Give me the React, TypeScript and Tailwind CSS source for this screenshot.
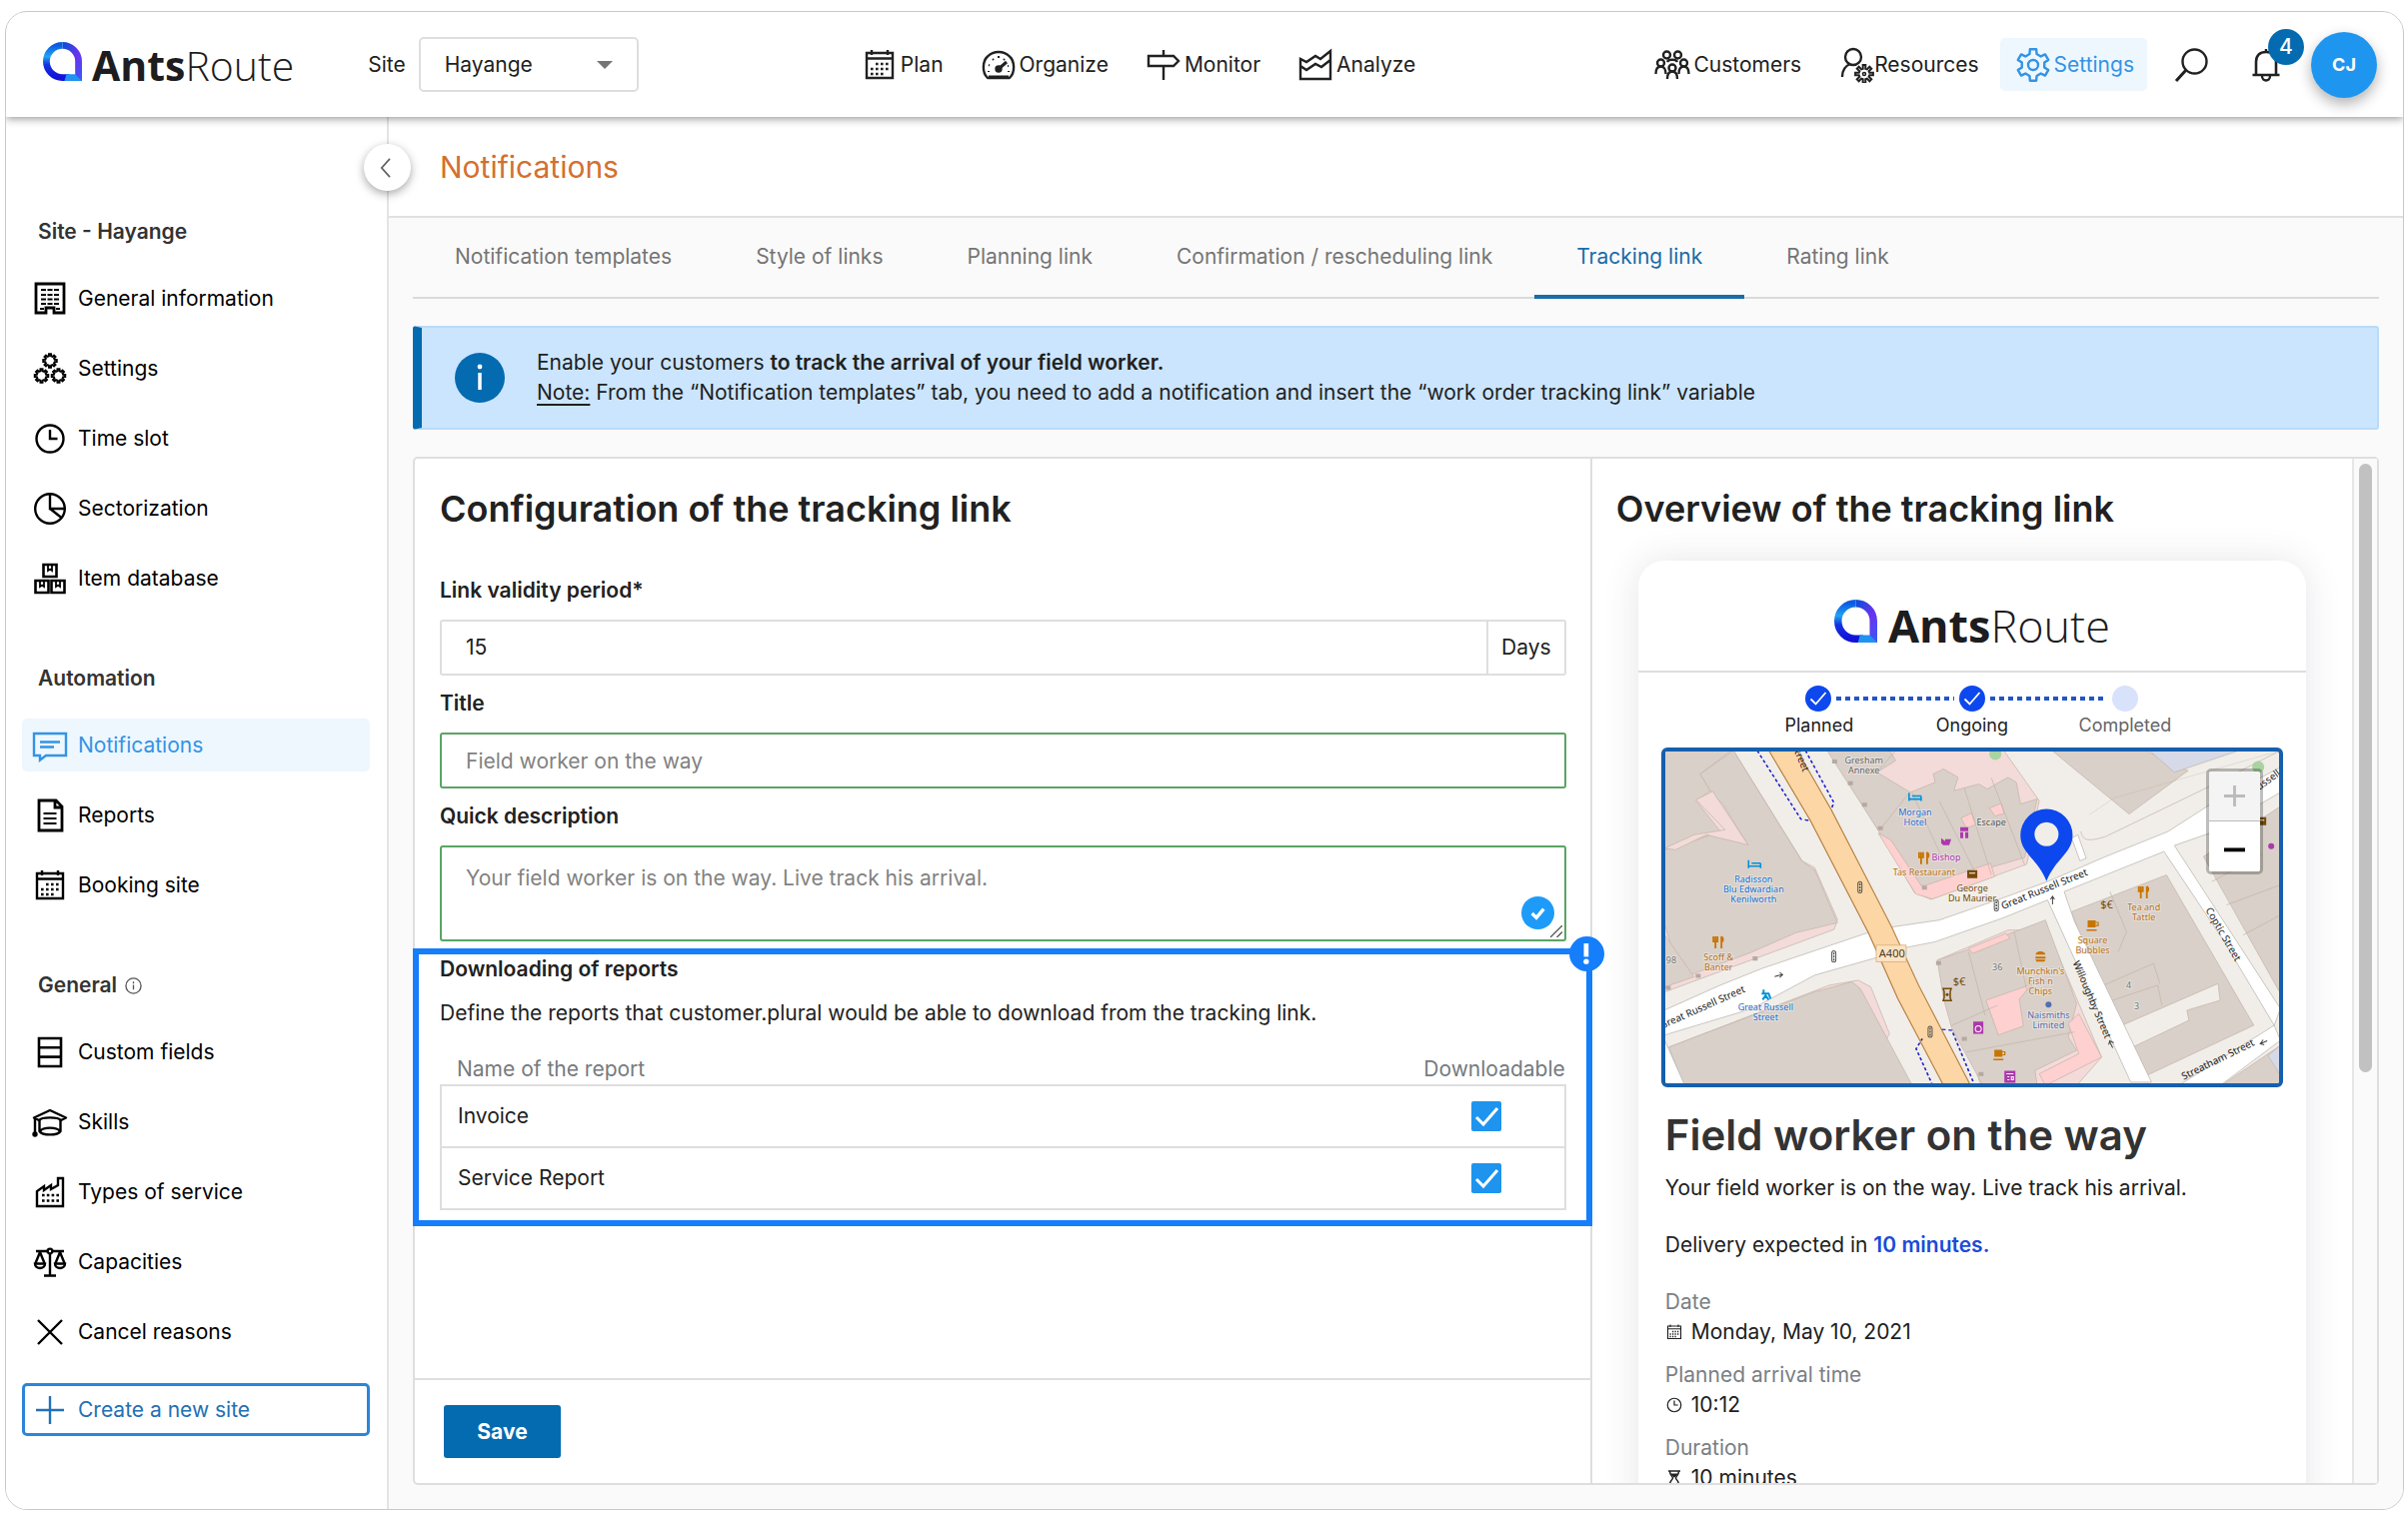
import type { ReactNode } from 'react';

const gearPath = (cx: number, cy: number, outer: number, inner: number, teeth: number) => {
  const step = (Math.PI * 2) / teeth;
  const points: string[] = [];
  for (let i = 0; i < teeth; i++) {
    const a = i * step - Math.PI / 2;
    [
      [inner, -0.3],
      [outer, -0.19],
      [outer, 0.19],
      [inner, 0.3],
    ].forEach(([r, o]) => {
      points.push(`${(cx + r * Math.cos(a + o * step)).toFixed(2)} ${(cy + r * Math.sin(a + o * step)).toFixed(2)}`);
    });
  }
  return `M${points.join('L')}Z`;
};

const Icon = ({ children, className = 'size-9' }: { children: ReactNode; className?: string }) => (
  <svg
    viewBox="0 0 36 36"
    className={`shrink-0 ${className}`}
    fill="none"
    stroke="currentColor"
    strokeWidth="2.4"
    aria-hidden="true"
  >
    {children}
  </svg>
);

const CalendarIcon = ({ className }: { className?: string }) => (
  <Icon className={className}>
    <path d="M5 6h26v25H5zM5 11.500h26M10 3v5M26 3v5" />
    <path d="M14 17h14M9 22h19M9 27h14" strokeWidth="2.600" strokeDasharray="2.600 2.400" />
  </Icon>
);

const GaugeIcon = () => (
  <Icon>
    <path d="M7 31C1 25 2 14 7 9.500 13 3.500 23 3.500 29 9.500 34 14 35 25 29 31z" strokeLinejoin="round" />
    <path d="M8 30h20" strokeWidth="3" />
    <path d="M18 22l8-7" strokeWidth="3" />
    <circle cx="18" cy="22" r="2.500" fill="currentColor" />
    <path d="M8 25l0-1M8 18l1 .5M12 12l1 1M18 9v2M24 12l-1 1M28 25v-1M28 19l-1 0" strokeWidth="2" />
  </Icon>
);

const SignIcon = () => (
  <Icon>
    <path d="M3 9h25l5 5-5 5H3zM18 3v6M18 19v14" />
  </Icon>
);

const ChartIcon = () => (
  <Icon>
    <path d="M3 12v20h30V4L23 12l-5-3-9 6zM3 19l6 4 9-6 6 3 9-7" />
  </Icon>
);

const PeopleIcon = () => (
  <Icon>
    <circle cx="12.500" cy="8" r="3.500" />
    <circle cx="23.500" cy="8" r="3.500" />
    <circle cx="6.500" cy="16" r="3.500" />
    <circle cx="29.500" cy="16" r="3.500" />
    <circle cx="18" cy="21" r="3.500" />
    <path d="M1.500 27c0-5 2-7.500 5-7.500s5 2.500 5 7.500M34.500 27c0-5-2-7.500-5-7.500s-5 2.500-5 7.500M13 32c0-5 2-7.500 5-7.500s5 2.500 5 7.500M13 15c1-3 9-3 10 0" />
  </Icon>
);

const WorkerIcon = () => (
  <Icon className="size-9">
    <circle cx="15" cy="10" r="8" />
    <path d="M4 30c0-6 3-11 8-13" />
    <path d={gearPath(26, 27, 9, 5.4, 8)} strokeWidth="2" />
    <circle cx="26" cy="27" r="1.500" strokeWidth="1.600" />
  </Icon>
);

const GearIcon = () => (
  <Icon className="size-9">
    <path d={gearPath(18, 18, 16, 11.5, 6)} strokeLinejoin="round" />
    <circle cx="18" cy="18" r="5" />
  </Icon>
);

const BuildingIcon = () => (
  <Icon>
    <path d="M4 3h28v29H22v-5h-8v5H4z" strokeWidth="2.800" />
    <path d="M9 9h18M9 14h18M9 18.500h18M9 23h18M8 28h4M24 28h4" strokeWidth="2" strokeDasharray="5 1.500" />
  </Icon>
);

const GearsIcon = () => (
  <Icon>
    <path d={gearPath(18, 10, 6.8, 4.8, 8)} strokeWidth="2" />
    <path d={gearPath(9.5, 25, 6.8, 4.8, 8)} strokeWidth="2" />
    <path d={gearPath(26.5, 25, 6.8, 4.8, 8)} strokeWidth="2" />
  </Icon>
);

const ClockIcon = ({ className }: { className?: string }) => (
  <Icon className={className}>
    <circle cx="18" cy="18" r="13.500" />
    <path d="M18 9v9h7.500" />
  </Icon>
);

const PieIcon = () => (
  <Icon>
    <circle cx="18" cy="18" r="14.800" />
    <path d="M18 3v15h15M18 18l11.500 9" />
  </Icon>
);

const BoxesIcon = () => (
  <Icon>
    <path d="M11.500 4h13v12h-13zM3.500 20h13v12h-13zM19.500 20h13v12h-13z" strokeWidth="2.600" />
    <path d="M16 4v6l2-1.500 2 1.500V4M8 20v6l2-1.500 2 1.500v-6M24 20v6l2-1.500 2 1.500v-6" strokeWidth="1.800" />
  </Icon>
);

const ChatIcon = () => (
  <Icon>
    <path d="M2 6h32v22H14l-6 4.500V28H2zM8 14.500h20M8 19.500h14" />
  </Icon>
);

const FileIcon = () => (
  <Icon>
    <path d="M7 3h17l6 6v24H7zM23 3v7h7" strokeWidth="2.800" />
    <path d="M11.500 16h13M11.500 21h13M11.500 26h13" strokeWidth="2" />
  </Icon>
);

const FieldsIcon = () => (
  <Icon>
    <path d="M7 4h22v28H7zM7 13.300h22M7 22.600h22" strokeWidth="2.600" />
  </Icon>
);

const CapIcon = () => (
  <Icon>
    <path d="M2 13.500L18 6l16 7.500-5 2.500C26 12.500 10 12.500 7 16z" strokeLinejoin="round" />
    <path d="M7.500 16v11c3 4.500 18 4.500 21 0V16M8 27c3-4.500 17-4.500 20 0M3 14v15" />
    <circle cx="3" cy="30" r="1.500" fill="currentColor" />
  </Icon>
);

const FactoryIcon = () => (
  <Icon>
    <path d="M5 32V17l7-5v4l7-5v4l7-4V4h5v28z" />
    <path d="M10 21h18M10 26.500h18" strokeWidth="2.600" strokeDasharray="2.600 2.200" />
  </Icon>
);

const ScaleIcon = () => (
  <Icon>
    <circle cx="18" cy="7" r="2.400" />
    <path d="M4 7h11M21 7h11M18 9v22M12 31.500h12M8 8L3.500 19M8 8l4.500 11M28 8l-4.500 11M28 8l4.500 11" />
    <path d="M3 19.500h10c0 6-10 6-10 0zM23 19.500h10c0 6-10 6-10 0z" />
  </Icon>
);

const CrossIcon = () => (
  <Icon>
    <path d="M6 6l24 24M30 6L6 30" />
  </Icon>
);

const PlusIcon = () => (
  <Icon>
    <path d="M18 4v28M4 18h28" />
  </Icon>
);

const HourglassIcon = ({ className }: { className?: string }) => (
  <Icon className={className}>
    <path d="M6 4h24M6 32h24M9 4c0 9 6 11 6 14s-6 5-6 14M27 4c0 9-6 11-6 14s6 5 6 14" strokeWidth="3" />
    <path d="M12 10h12l-6 6z" fill="currentColor" />
  </Icon>
);

const Logo = ({ large = false }: { large?: boolean }) => (
  <div className={large ? 'flex items-baseline gap-[11px]' : 'flex items-baseline gap-[10px]'}>
    <svg viewBox="0 0 40 40" className={large ? 'size-[43px]' : 'size-[39px]'} fill="none" strokeWidth="7" aria-hidden="true">
      <defs>
        <linearGradient id="logo-left" x1="0" y1="0" x2="0" y2="1">
          <stop offset="0" stopColor="#0b5be0" />
          <stop offset="0.35" stopColor="#22a4f4" />
          <stop offset="0.6" stopColor="#1433e0" />
          <stop offset="1" stopColor="#1212d8" />
        </linearGradient>
        <linearGradient id="logo-right" x1="0" y1="0" x2="1" y2="1">
          <stop offset="0" stopColor="#0a4fd6" />
          <stop offset="0.6" stopColor="#6a32ee" />
          <stop offset="1" stopColor="#3f55f5" />
        </linearGradient>
      </defs>
      <path d="M20 3.500A16.500 16.500 0 0 1 36.500 20V40" stroke="url(#logo-right)" />
      <path d="M20 3.500A16.500 16.500 0 0 0 20 36.500H27" stroke="url(#logo-left)" />
      <path d="M24 33h9l7 7H22z" fill="#2292f0" />
    </svg>
    <span className={`font-['Open_Sans',sans-serif] text-[#1d1d1f] ${large ? 'text-[45px]/[60px]' : 'text-[41px]/[54px]'}`}>
      <b className="font-bold">Ants</b>
      <span className="font-light">Route</span>
    </span>
  </div>
);

const mainLinks = [
  { label: 'Plan', icon: <CalendarIcon /> },
  { label: 'Organize', icon: <GaugeIcon /> },
  { label: 'Monitor', icon: <SignIcon /> },
  { label: 'Analyze', icon: <ChartIcon /> },
];

const Header = () => (
  <header className="relative z-20 flex h-[105px] shrink-0 items-center justify-between bg-white pr-[26px] pl-[37px] shadow-[0_2px_8px_rgba(0,0,0,0.4)]">
    <div className="flex items-center">
      <Logo />
      <label htmlFor="site" className="ml-[74px]">
        Site
      </label>
      <div className="relative ml-[13px]">
        <select
          id="site"
          className="h-[55px] w-[220px] appearance-none rounded-[5px] border-2 border-[#dedede] bg-white pl-6"
        >
          <option>Hayange</option>
        </select>
        <svg viewBox="0 0 16 8" className="pointer-events-none absolute top-6 right-[26px] w-4" fill="#757575" aria-hidden="true">
          <path d="M0 0h16L8 8z" />
        </svg>
      </div>
    </div>
    <nav className="mr-4 flex gap-[37px]">
      {mainLinks.map((link) => (
        <a key={link.label} href="#" className="flex items-center gap-[3px]">
          {link.icon}
          {link.label}
        </a>
      ))}
    </nav>
    <div className="flex items-center">
      <a href="#" className="flex items-center gap-[3px]">
        <PeopleIcon />
        Customers
      </a>
      <a href="#" className="ml-[37px] flex items-center">
        <WorkerIcon />
        Resources
      </a>
      <a href="#" className="ml-[21px] flex h-[53px] items-center gap-[3px] rounded-[5px] bg-[#eef7fe] pr-[13px] pl-[15px] text-[#3393e4]">
        <GearIcon />
        Settings
      </a>
      <button type="button" aria-label="Search" className="ml-[27px]">
        <Icon>
          <circle cx="20.500" cy="14.500" r="12" />
          <path d="M12 23L2 34" strokeWidth="3" />
        </Icon>
      </button>
      <button type="button" aria-label="Alerts" className="relative ml-[38px]">
        <Icon>
          <path d="M8 27V15C8 8 12 5 18 5s10 3 10 10v12M4.500 28h27" strokeWidth="2.600" />
          <path d="M14 29c0 6 8 6 8 0M18 2v3" />
        </Icon>
        <span className="absolute -top-[18px] left-5 flex size-9 items-center justify-center rounded-full bg-[#056bb0] font-medium text-white">
          4
        </span>
      </button>
      <button
        type="button"
        className="ml-[27px] size-[66px] rounded-full bg-[#1e96f0] text-[18px] font-bold text-white shadow-[0_6px_14px_rgba(0,0,0,0.3)]"
      >
        CJ
      </button>
    </div>
  </header>
);

const sections = [
  {
    title: 'Site - Hayange',
    items: [
      { label: 'General information', icon: <BuildingIcon /> },
      { label: 'Settings', icon: <GearsIcon /> },
      { label: 'Time slot', icon: <ClockIcon /> },
      { label: 'Sectorization', icon: <PieIcon /> },
      { label: 'Item database', icon: <BoxesIcon /> },
    ],
  },
  {
    title: 'Automation',
    items: [
      { label: 'Notifications', icon: <ChatIcon />, active: true },
      { label: 'Reports', icon: <FileIcon /> },
      { label: 'Booking site', icon: <CalendarIcon /> },
    ],
  },
  {
    title: 'General',
    info: true,
    items: [
      { label: 'Custom fields', icon: <FieldsIcon /> },
      { label: 'Skills', icon: <CapIcon /> },
      { label: 'Types of service', icon: <FactoryIcon /> },
      { label: 'Capacities', icon: <ScaleIcon /> },
      { label: 'Cancel reasons', icon: <CrossIcon /> },
    ],
  },
];

const Sidebar = () => (
  <aside className="relative flex w-[383px] shrink-0 flex-col border-r-2 border-[#e4e4e4] bg-white pr-[17px] pl-4">
    <button
      type="button"
      aria-label="Collapse menu"
      className="absolute top-[27px] -right-6 z-10 flex size-[47px] items-center justify-center rounded-full bg-white text-[#666] shadow-[0_3px_10px_rgba(0,0,0,0.35)]"
    >
      <svg viewBox="0 0 12 22" className="mr-1 h-5" fill="none" stroke="currentColor" strokeWidth="2" aria-hidden="true">
        <path d="M11 1L2 11l9 10" />
      </svg>
    </button>
    <div className="mt-[100px] flex flex-col gap-[59px]">
      {sections.map((section) => (
        <section key={section.title}>
          <h2 className="mb-[25px] flex items-center gap-2 pl-4 font-semibold text-[#333]">
            {section.title}
            {section.info && (
              <svg viewBox="0 0 18 18" className="size-[17px]" fill="none" stroke="#555" strokeWidth="1.400" aria-hidden="true">
                <circle cx="9" cy="9" r="8" />
                <path d="M9 8v5M9 4.500v2" />
              </svg>
            )}
          </h2>
          <ul className="flex flex-col gap-[17px]">
            {section.items.map((item) => (
              <li key={item.label}>
                <a
                  href="#"
                  className={`flex h-[53px] items-center gap-[10px] rounded-[5px] pl-[10px] ${
                    'active' in item ? 'bg-[#eef7fe] text-[#3393e4]' : 'text-black'
                  }`}
                >
                  {item.icon}
                  {item.label}
                </a>
              </li>
            ))}
          </ul>
        </section>
      ))}
    </div>
    <button
      type="button"
      className="mt-[25px] flex h-[53px] items-center gap-[10px] rounded-[5px] border-3 border-[#2b86da] pl-[7px] text-[#2270b5]"
    >
      <PlusIcon />
      Create a new site
    </button>
  </aside>
);

const tabs = [
  'Notification templates',
  'Style of links',
  'Planning link',
  'Confirmation / rescheduling link',
  'Tracking link',
  'Rating link',
];

const Tabs = () => (
  <nav className="mx-6 flex h-[81px] shrink-0 border-b-2 border-[#dadada]">
    {tabs.map((tab) => (
      <a
        key={tab}
        href="#"
        className={`-mb-0.5 flex items-center border-b-4 px-[42px] ${
          tab === 'Tracking link' ? 'border-[#1a6ca8] text-[#1a6ca8]' : 'border-transparent text-[#757575]'
        }`}
      >
        {tab}
      </a>
    ))}
  </nav>
);

const Banner = () => (
  <div className="mx-6 mt-[27px] flex shrink-0 items-center gap-8 rounded-[3px] border-2 border-l-9 border-[#b9daf8] border-l-[#056bb0] bg-[#cbe5fe] py-5 pl-[33px]">
    <svg viewBox="0 0 50 50" className="size-[50px]" aria-hidden="true">
      <circle cx="25" cy="25" r="25" fill="#056bb0" />
      <path d="M25 20v17" stroke="#fff" strokeWidth="3.500" />
      <circle cx="25" cy="14" r="2.400" fill="#fff" />
    </svg>
    <p>
      Enable your customers <b className="font-semibold">to track the arrival of your field worker.</b>
      <br />
      <span className="underline underline-offset-4">Note:</span> From the “Notification templates” tab, you need to add a
      notification and insert the “work order tracking link” variable
    </p>
  </div>
);

const reports = ['Invoice', 'Service Report'];

const ReportsTable = () => (
  <div className="relative mt-[7px] -mr-[26px] -ml-[27px] border-6 border-[#157efb] pr-5 pb-[10px] pl-[21px]">
    <h3 className="font-semibold">Downloading of reports</h3>
    <p className="mt-[14px]">
      Define the reports that customer.plural would be able to download from the tracking link.
    </p>
    <table className="mt-[26px] w-full border-collapse">
      <thead>
        <tr className="text-[#757b80]">
          <th className="pl-4 text-left font-normal">Name of the report</th>
          <th className="w-[156px] text-right font-normal">Downloadable</th>
        </tr>
      </thead>
      <tbody>
        {reports.map((report) => (
          <tr key={report} className="h-[62px] border-2 border-[#dedede]">
            <td className="pl-4">
              <label htmlFor={report}>{report}</label>
            </td>
            <td>
              <div className="relative mx-auto size-[30px]">
                <input
                  id={report}
                  type="checkbox"
                  defaultChecked
                  className="block size-[30px] appearance-none rounded-[2px] bg-[#1e94ef]"
                />
                <svg viewBox="0 0 30 30" className="pointer-events-none absolute inset-0" fill="none" stroke="#fff" strokeWidth="3" aria-hidden="true">
                  <path d="M5 16l7 7L26 7" />
                </svg>
              </div>
            </td>
          </tr>
        ))}
      </tbody>
    </table>
    <span className="absolute -top-[18px] -right-[18px] flex size-[35px] items-center justify-center rounded-full bg-[#157efb]">
      <svg viewBox="0 0 6 22" className="h-[21px]" fill="#fff" aria-hidden="true">
        <path d="M.5 0h5v14h-5z" />
        <circle cx="3" cy="19" r="2.800" />
      </svg>
    </span>
  </div>
);

const ConfigForm = () => (
  <form className="relative z-10 flex w-3/5 flex-col border-r-2 border-[#dedede]">
    <div className="flex-1 pt-[30px] pr-6 pl-[25px]">
      <h2 className="text-[36px]/[40px] font-semibold">Configuration of the tracking link</h2>
      <label htmlFor="validity" className="mt-[47px] block font-semibold">
        Link validity period*
      </label>
      <div className="mt-[14px] flex h-14 rounded-[3px] border-2 border-[#dedede]">
        <input id="validity" defaultValue="15" className="min-w-0 flex-1 pl-6" />
        <span className="flex w-[78px] items-center justify-center border-l-2 border-[#dedede]">Days</span>
      </div>
      <label htmlFor="title" className="mt-[13px] block font-semibold">
        Title
      </label>
      <input
        id="title"
        placeholder="Field worker on the way"
        className="mt-[14px] h-14 w-full rounded-[3px] border-2 border-[#58a564] pl-6 placeholder:text-[#828282]"
      />
      <label htmlFor="description" className="mt-[13px] block font-semibold">
        Quick description
      </label>
      <div className="relative mt-[14px]">
        <textarea
          id="description"
          placeholder="Your field worker is on the way. Live track his arrival."
          className="block h-24 w-full resize-none rounded-[3px] border-2 border-[#58a564] px-6 py-4 placeholder:text-[#828282]"
        />
        <svg viewBox="0 0 34 34" className="absolute right-3 bottom-3 size-[33px]" fill="none" aria-hidden="true">
          <circle cx="17" cy="17" r="17" fill="#1e9af8" />
          <path d="M11 17.500l4.500 4.500 7.500-9" stroke="#fff" strokeWidth="3.500" />
        </svg>
        <svg viewBox="0 0 12 12" className="absolute right-1 bottom-1 size-3" stroke="#555" strokeWidth="1.300" aria-hidden="true">
          <path d="M0 12L12 0M6.500 12l5.500-5.500" />
        </svg>
      </div>
      <ReportsTable />
    </div>
    <div className="flex h-[105px] items-center border-t-2 border-[#dedede] pl-[29px]">
      <button type="submit" className="h-[53px] w-[117px] rounded-[3px] bg-[#056bb0] font-bold text-white">
        Save
      </button>
    </div>
  </form>
);

const steps = [
  { label: 'Planned', done: true },
  { label: 'Ongoing', done: true },
  { label: 'Completed', done: false },
];

const Steps = () => (
  <div className="pt-[13px]">
    <div className="mx-auto flex w-[333px] items-center">
      {steps.map((step, index) => (
        <div key={step.label} className={index === 0 ? 'flex items-center' : 'flex flex-1 items-center'}>
          {index > 0 && (
            <span className="mx-[5px] h-1 flex-1 bg-[repeating-linear-gradient(90deg,#2355c4_0px,#2355c4_5px,transparent_5px,transparent_9px)]" />
          )}
          <svg viewBox="0 0 26 26" className="size-[26px]" fill="none" aria-hidden="true">
            <circle cx="13" cy="13" r="13" fill={step.done ? '#0d47ee' : '#d9e2fb'} />
            {step.done && <path d="M5.500 13.500l5 5L20.500 7" stroke="#fff" strokeWidth="1.800" />}
          </svg>
        </div>
      ))}
    </div>
    <div className="mx-auto mt-0.5 grid w-[459px] grid-cols-3 text-center text-[18px]/[24px]">
      {steps.map((step) => (
        <span key={step.label} className={step.done ? '' : 'text-[#666]'}>
          {step.label}
        </span>
      ))}
    </div>
  </div>
);

type Place = { x: number; y: number; color: string; lines: string[] };

const places: Place[] = [
  { x: 198, y: 13, color: '#666', lines: ['Gresham', 'Annexe'] },
  { x: 249, y: 64, color: '#1a73d8', lines: ['Morgan', 'Hotel'] },
  { x: 325, y: 74, color: '#555', lines: ['Escape'] },
  { x: 280, y: 109, color: '#ac39ac', lines: ['Bishop'] },
  { x: 258, y: 124, color: '#b8721c', lines: ['Tas Restaurant'] },
  { x: 306, y: 140, color: '#734a08', lines: ['George', 'Du Maurier'] },
  { x: 88, y: 131, color: '#1a73d8', lines: ['Radisson', 'Blu Edwardian', 'Kenilworth'] },
  { x: 53, y: 209, color: '#b8721c', lines: ['Scoff &', 'Banter'] },
  { x: 100, y: 259, color: '#1a73d8', lines: ['Great Russell', 'Street'] },
  { x: 477, y: 159, color: '#b8721c', lines: ['Tea and', 'Tattle'] },
  { x: 426, y: 192, color: '#b8721c', lines: ['Square', 'Bubbles'] },
  { x: 374, y: 223, color: '#b8721c', lines: ["Munchkin's", 'Fish n', 'Chips'] },
  { x: 382, y: 267, color: '#5270b0', lines: ['Naismiths', 'Limited'] },
  { x: 331, y: 219, color: '#777', lines: ['36'] },
  { x: 462, y: 237, color: '#777', lines: ['4'] },
  { x: 470, y: 258, color: '#777', lines: ['3'] },
  { x: 6, y: 212, color: '#777', lines: ['98'] },
];

const streets = [
  { x: 37, y: 256, angle: -24, label: 'Great Russell Street' },
  { x: 378, y: 138, angle: -22, label: 'Great Russell Street' },
  { x: 425, y: 248, angle: 67, label: 'Willoughby Street' },
  { x: 556, y: 183, angle: 60, label: 'Coptic Street' },
  { x: 551, y: 308, angle: -26, label: 'Streatham Street' },
  { x: 611, y: 22, angle: -36, label: 'Russell Street' },
  { x: 123, y: -20, angle: 67, label: 'Bloomsbury Street' },
];

const Fork = ({ x, y }: { x: number; y: number }) => (
  <path
    transform={`translate(${x} ${y})`}
    d="M-5-6v5h4v-5M-3-6v12M3-6v12M3-6q3 3 0 6"
    stroke="#c77400"
    strokeWidth="1.800"
    fill="none"
  />
);

const Bed = ({ x, y }: { x: number; y: number }) => (
  <path transform={`translate(${x} ${y})`} d="M-6-4v8M-6 2h12M6-1v5M-3-1h9" stroke="#0092da" strokeWidth="1.600" fill="none" />
);

const Cup = ({ x, y }: { x: number; y: number }) => (
  <g transform={`translate(${x} ${y})`}>
    <path d="M-5-5h8v7h-8zM-6 4h10v1.500h-10z" fill="#c77400" />
    <path d="M3-3h2.500v3H3" stroke="#c77400" strokeWidth="1.200" fill="none" />
  </g>
);

const Light = ({ x, y }: { x: number; y: number }) => (
  <g transform={`translate(${x} ${y})`} fill="none" stroke="#555" strokeWidth="1">
    <rect x="-2" y="-5.500" width="4" height="11" rx="2" />
    <path d="M0-4v2M0-1v2M0 2v2" strokeWidth="1.500" />
  </g>
);

const StreetMap = () => (
  <div className="relative mx-[23px] mt-[10px] h-[340px] overflow-hidden rounded-[6px] border-4 border-[#155fae] bg-[#f1eeea]">
    <svg viewBox="0 0 612 332" preserveAspectRatio="xMidYMid slice" className="size-full" role="img" aria-label="Map">
      <g transform="translate(-17 -13) scale(0.4146 0.3333)" stroke="#c4b6ab" strokeWidth="2">
        <g fill="#f3dbda">
          <path d="M40 38h165l165 330 30 20 55 155-8 30L40 760z" />
          <path d="M445 38h410l85 150-30 190-230 105-40-20L560 290 500 170z" />
          <path d="M50 925l385-185 70-15 30 20 45 140-70 155z" />
          <path d="M695 665l170-90 95 0 130 380-60 85H800z" />
        </g>
        <g fill="#d9d0c9">
          <path d="M40 38h160l-75 70 25 50-35 30 70 110-55 20-90 30z" />
          <path d="M40 335l150-60 50 45-60-120-30-40-25-52 80-70 165 332 30 25 55 158-100 30-110 60-120 55L80 720 40 560z" />
          <path d="M40 590l70 125-70 30z" />
          <path d="M430 38h150l15 30-45 35 80 60 60-30-5-25 25-15 35 25-10 40 60-20 20 15 50-35 20 15 10 65 40-15-30 175-235 85-35-5L560 290z" />
          <path d="M880 38h220l112 65-142 130z" transform="translate(86 -5)" />
          <path d="M50 925l350-165 90-30 20 20 125 290H85z" />
          <path d="M695 665l70-30 190-90 75 250-20 100 20 40-100 60 5 45H805l-75-170-20-90z" />
          <path d="M1018 520l228-110 210 450-275 160-62-150z" />
          <path d="M1335 355l185-150v560z" />
          <path d="M1378 1040l142-120v120z" />
        </g>
        <path d="M1205 38h215l-155 65z" fill="#d5d9e8" />
        <path d="M1490 950l30-30v90z" fill="#d5d9e8" />
        <g fill="#ffd0d0">
          <path d="M553 285l30 20 75 140 165-70 10 40-150 67-40-15z" />
          <path d="M812 785l110-48-30 45 10 80-60 27z" />
          <path d="M940 1005l95-60-25-90 25-30 55 130-135 85z" />
          <path d="M752 240l25-15 10 35-22 10z" />
          <path d="M820 210l28-14 8 30-22 8z" />
          <path d="M770 630l90-45 10 15-90 45z" />
        </g>
        <path d="M40 330l70-40 75-15-70-90 40-25 85 160-100-30-75 45z" fill="#f3dbda" />
        <path d="M1130 865l240-130 5 50-80 30 5 30-135 80z" fill="#f1eeea" />
        <g fill="none">
          <path d="M595 38l-45 65M635 165l70 190M700 190l85 210M760 150l65 260M825 120l80 260M630 160l-70 110M770 640l40 190M880 580l30 175M730 860l110-60M765 940l260-60M1110 460l40 120-20 60M1095 740l120-65 15 60M1105 790l120-50 10 60M1355 430l120-80M1390 500l130-60M1430 590l90-60M1040 280c5 30 20 30 60 15l250-150 170-107" />
          <path d="M1060 230l60-50 400-142" strokeWidth="1" />
        </g>
        <g fill="#fff" stroke="#b9b4ae">
          <path d="M38 815l135-75 100-50 257-108 55-16 115-21 150-65 110-50 140-75 150-75 100-80 170-112v75l-170 122-85 37 255 488-15 50-125-260-140-260-110 55-130 65 25 90 185 480h-50L960 485l-110 55-160 70-90 22-30 18-170 60-150 100-200 75-12 5z" />
          <path d="M1505 860l15 45-145 135h-100z" />
          <path d="M38 900l50 140H38z" />
          <path d="M1018 300l15-10 20 70-15 8z" />
        </g>
        <path d="M290 38h68l82 177 145 350 65 175 125 300h-65L600 780l-70-195-140-337z" fill="#fcd6a4" stroke="#b98548" strokeWidth="3" />
        <path
          d="M262 38l105 205 22 5M378 38l68 155-6 22M684 1040l-40-110 15-30M706 872l24 3 55 165"
          fill="none"
          stroke="#2626c8"
          strokeWidth="4"
          strokeDasharray="9 7"
        />
        <g fill="#b5a9a2" stroke="none">
          <path d="M442 65h12v12h-12zM480 130h12v12h-12zM514 194h12v12h-12zM552 264h12v12h-12zM658 442h12v12h-12zM692 668h12v12h-12zM754 894h12v12h-12zM794 1000h12v12h-12zM251 654h12v12h-12zM114 706h12v12h-12zM42 742h12v12H42z" />
        </g>
        <path d="M548 620h72v50h-72z" fill="#fbe3c4" stroke="#d9a970" />
      </g>
      <circle cx="329" cy="3" r="6" fill="#a9d3a0" />
      <circle cx="591" cy="16" r="6" fill="#a9d3a0" />
      <Bed x={249} y={46} />
      <Bed x={89} y={113} />
      <Fork x={258} y={107} />
      <Fork x={53} y={191} />
      <Fork x={477} y={141} />
      <Cup x={426} y={174} />
      <Cup x={333} y={303} />
      <Light x={194} y={136} />
      <Light x={330} y={154} />
      <Light x={168} y={205} />
      <Light x={264} y={280} />
      <path d="M294 76h8v4h-8zM294 81h3v6h-3zM299 81h3v6h-3zM275 87l4 3v-2h6l-2 6h-6l-2-2z" fill="#ac39ac" />
      <path d="M307 270h10v12h-10zM338 319h11v12h-11z" fill="#ac39ac" />
      <circle cx="312" cy="277" r="3" fill="#ac39ac" stroke="#fff" />
      <path d="M340 322h7M341 325h2M341 328h2M345 325h2v3h-2z" stroke="#fff" fill="none" />
      <path d="M301 119h10v8h-10zM591 66h8v8h-8z" fill="#734a08" />
      <path d="M303 122h6M593 69h4" stroke="#fff" />
      <path d="M369 203h10l-1-2q-4-2-8 0zM369 205h10v2h-10zM369 208h10l-1 2h-8z" fill="#c77400" />
      <circle cx="382" cy="253" r="3" fill="#5270b0" />
      <circle cx="604" cy="95" r="3" fill="#ac39ac" />
      <path d="M277 237h8l-1 3v6l1 3h-8l1-3v-6z" fill="none" stroke="#734a08" strokeWidth="1.500" />
      <circle cx="281" cy="243" r="1.500" fill="#734a08" />
      <path d="M98 238v4h5l2 5M96 242h6M97 248l3-4 3 4" stroke="#0092da" strokeWidth="2" fill="none" />
      <path d="M109 225l7-2M114 221l3 2-3 3M386 153v-7M384 148l2-3 2 3M446 296l-3-6M442 293l1-4 4 2M600 289l-7 3M596 288l-3 4 4 1" stroke="#444" fill="none" />
      <g fontFamily="'Noto Sans', sans-serif" textAnchor="middle">
        <g fontSize="11" fill="#734a08">
          <text x="440" y="157">$€</text>
          <text x="293" y="234">$€</text>
        </g>
        <text x="226" y="206" fontSize="11" fill="#4a3b2a">
          A400
        </text>
        <g fontSize="9" stroke="#f4f0ec" strokeWidth="2" strokeOpacity="0.5" paintOrder="stroke">
          {places.map((place) => (
            <text key={place.lines[0]} x={place.x} y={place.y} fill={place.color}>
              {place.lines.map((line, i) => (
                <tspan key={line} x={place.x} dy={i === 0 ? 0 : 10}>
                  {line}
                </tspan>
              ))}
            </text>
          ))}
        </g>
        <g fontSize="10" fill="#222">
          {streets.map((street) => (
            <text key={street.x} transform={`translate(${street.x} ${street.y}) rotate(${street.angle})`} y="3">
              {street.label}
            </text>
          ))}
        </g>
      </g>
      <path d="M380 130C371 107 354 102 354 84a26 26 0 0 1 52 0C406 102 389 107 380 130zM380 71a12 12 0 1 0 .01 0z" fill="#0d47ee" fillRule="evenodd" />
    </svg>
    <div className="absolute top-[17px] right-4 flex flex-col rounded-[5px] border-3 border-black/25">
      <button type="button" aria-label="Zoom in" className="flex h-[50px] w-[51px] items-center justify-center rounded-t-[2px] border-b border-[#bbb] bg-[#f4f4f4]">
        <svg viewBox="0 0 22 22" className="size-[21px]" stroke="#bbb" strokeWidth="3" aria-hidden="true">
          <path d="M11 0v22M0 11h22" />
        </svg>
      </button>
      <button type="button" aria-label="Zoom out" className="flex h-[50px] w-[51px] items-center justify-center rounded-b-[2px] bg-white">
        <svg viewBox="0 0 22 22" className="size-[21px]" stroke="#000" strokeWidth="4" aria-hidden="true">
          <path d="M0 14h22" />
        </svg>
      </button>
    </div>
  </div>
);

const details = [
  { label: 'Date', value: 'Monday, May 10, 2021', icon: <CalendarIcon className="size-[18px]" /> },
  { label: 'Planned arrival time', value: '10:12', icon: <ClockIcon className="size-[18px]" /> },
  { label: 'Duration', value: '10 minutes', icon: <HourglassIcon className="size-[18px]" /> },
];

const Overview = () => (
  <section className="flex min-w-0 flex-1 overflow-hidden">
    <div className="min-w-0 flex-1 px-6 pt-[30px]">
      <h2 className="text-[36px]/[40px] font-semibold">Overview of the tracking link</h2>
      <div className="mx-[22px] mt-8 h-[1200px] rounded-[26px] bg-white shadow-[0_0_36px_rgba(60,60,90,0.13)]">
        <div className="flex h-[112px] items-center justify-center border-b-2 border-[#dedede] pt-5">
          <Logo large />
        </div>
        <Steps />
        <StreetMap />
        <div className="px-[27px]">
          <h3 className="mt-[23px] text-[42px]/[50px] font-semibold text-[#333]">Field worker on the way</h3>
          <p className="mt-[13px]">Your field worker is on the way. Live track his arrival.</p>
          <p className="mt-[27px]">
            Delivery expected in <b className="font-semibold text-[#1b4bd8]">10 minutes.</b>
          </p>
          <dl className="mt-[27px] flex flex-col gap-[13px]">
            {details.map((detail) => (
              <div key={detail.label}>
                <dt className="text-[#7a8085]">{detail.label}</dt>
                <dd className="flex items-center gap-2">
                  {detail.icon}
                  {detail.value}
                </dd>
              </div>
            ))}
          </dl>
        </div>
      </div>
    </div>
    <div className="flex w-[25px] shrink-0 justify-center border-l-2 border-[#e6e6e6] bg-[#fafafa] py-[5px]">
      <div className="h-3/5 w-[13px] rounded-full bg-[#c1c1c1]" />
    </div>
  </section>
);

const App = () => {
  return (
    <div className="h-screen bg-white pt-[11px] pr-1 pb-[10px] pl-[5px] font-['Inter',sans-serif] text-[21px]/[30px] text-[#212121]">
      <div className="flex h-full flex-col overflow-hidden rounded-[22px] border border-[#c9c9c9]">
        <Header />
        <div className="flex min-h-0 flex-1">
          <Sidebar />
          <main className="flex min-w-0 flex-1 flex-col bg-[#fafafa]">
            <div className="flex h-[101px] shrink-0 items-center border-b-2 border-[#e0e0e0] bg-white pl-[51px]">
              <h1 className="text-[30px]/[40px] text-[#d4702f]">Notifications</h1>
            </div>
            <Tabs />
            <Banner />
            <div className="mx-6 mt-[27px] mb-6 flex min-h-0 flex-1 rounded-[5px] border-2 border-[#dedede] bg-white">
              <ConfigForm />
              <Overview />
            </div>
          </main>
        </div>
      </div>
    </div>
  );
};

export default App;
